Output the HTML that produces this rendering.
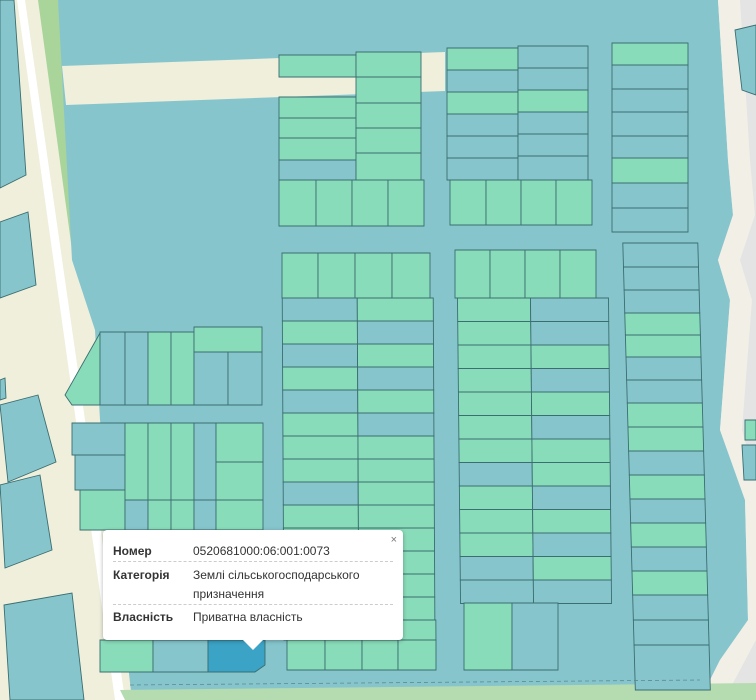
<!DOCTYPE html>
<html><head><meta charset="utf-8">
<style>
html,body{margin:0;padding:0;width:756px;height:700px;overflow:hidden;background:#efefdc;}
svg{position:absolute;left:0;top:0;}
.pop{position:absolute;left:103px;top:530px;width:300px;height:110px;background:#fff;border-radius:4px;box-shadow:0 1px 4px rgba(0,0,0,.3);font-family:"Liberation Sans",sans-serif;font-size:12px;color:#333;}
.pop .r{position:absolute;left:10px;right:10px;}
.pop .l{position:absolute;left:0;font-weight:bold;color:#333;}
.pop .v{position:absolute;left:80px;color:#333;}
.pop .sep{position:absolute;left:10px;right:10px;border-top:1px dashed #ccc;}
.tip{position:absolute;left:243px;top:640px;width:0;height:0;border-left:10px solid transparent;border-right:10px solid transparent;border-top:10px solid #fff;}
.x{position:absolute;right:6px;top:4px;font-size:11px;color:#777;}
</style></head><body>
<svg id="m" width="756" height="700" viewBox="0 0 756 700"></svg>
<div class="pop">
<div class="x">×</div>
<div class="r" style="top:14px"><span class="l">Номер</span><span class="v">0520681000:06:001:0073</span></div>
<div class="sep" style="top:31px"></div>
<div class="r" style="top:38px"><span class="l">Категорія</span><span class="v">Землі сільськогосподарського</span></div>
<div class="r" style="top:57px"><span class="l"></span><span class="v">призначення</span></div>
<div class="sep" style="top:74px"></div>
<div class="r" style="top:80px"><span class="l">Власність</span><span class="v">Приватна власність</span></div>
</div>
<div class="tip"></div>
<script>
var B='#87c5cd',G='#89dcb9',S='#3a6e70';
var o='';
function poly(p,f,st){o+='<polygon points="'+p+'" fill="'+f+'"'+(st?' stroke="'+S+'" stroke-width="0.9"':'')+'/>';}
function R(x0,x1,y0,y1,c,k){k=k||0;var a=x0+k*(y0-250),b=x1+k*(y0-250),cc=x0+k*(y1-250),d=x1+k*(y1-250);poly(a+','+y0+' '+b+','+y0+' '+d+','+y1+' '+cc+','+y1,c,1);}
// right gray area
poly('730,0 756,0 756,700 700,700','#e4e4e4');
// road white
poly('17,0 25,0 125,700 115,700','#ffffff');
// green strip
poly('38,0 58,0 88,250 72,250','#a9d49a');
// left parcels
poly('0,0 14,0 26,175 0,188',B,1);
poly('0,222 28,212 36,285 0,298',B,1);
poly('0,405 38,395 56,462 8,482',B,1);
poly('0,485 40,475 52,550 5,568',B,1);
poly('4,605 72,593 84,700 10,700',B,1);
poly('0,380 5,378 6,398 0,400',B,1);
// main blue
poly('58,0 718,0 728,160 733,215 718,260 730,300 720,430 745,500 748,620 720,660 700,700 132,700 100,420 95,330 72,260',B);
// right cream strip
poly('718,0 740,0 750,160 755,215 740,260 752,300 742,430 756,480 756,640 740,670 724,700 700,700 720,660 748,620 745,500 720,430 730,300 718,260 733,215 728,160','#f1efe6');
poly('735,30 756,25 756,95 742,90',B,1);
poly('745,420 756,420 756,440 745,440',G,1);
poly('742,445 756,445 756,480 744,480',B,1);
// horizontal road
poly('62,66 445,52 445,91 66,105','#efefdc');
// bottom green strip
poly('120,690 756,683 756,700 125,700','#b5dcb0');
// Block A
[[55,77,G],[97,118,G],[118,138,G],[138,160,G],[160,180,B]].forEach(function(r){R(279,356,r[0],r[1],r[2]);});
[[52,77,G],[77,103,G],[103,128,G],[128,153,G],[153,180,G]].forEach(function(r){R(356,421,r[0],r[1],r[2]);});
[[279,316],[316,352],[352,388],[388,424]].forEach(function(c){R(c[0],c[1],180,226,G);});
// Block B
[[48,70,G],[70,92,B],[92,114,G],[114,136,B],[136,158,B],[158,180,B]].forEach(function(r){R(447,518,r[0],r[1],r[2]);});
[[46,68,B],[68,90,B],[90,112,G],[112,134,B],[134,156,B],[156,180,B]].forEach(function(r){R(518,588,r[0],r[1],r[2]);});
[[450,486],[486,521],[521,556],[556,592]].forEach(function(c){R(c[0],c[1],180,225,G);});
// Block C
[[43,65,G],[65,89,B],[89,112,B],[112,136,B],[136,158,B],[158,183,G],[183,208,B],[208,232,B]].forEach(function(r){R(612,688,r[0],r[1],r[2]);});
// Block D
[[282,318],[318,355],[355,392],[392,430]].forEach(function(c){R(c[0],c[1],253,298,G);});
var dL=[B,G,B,G,B,G,G,G,B,G,G,B,G,B,G],dR=[G,B,G,B,G,B,G,G,G,G,G,G,G,G,G];
for(var i=0;i<14;i++){var y0=298+i*23;R(282,357,y0,y0+23,dL[i],0.005);R(357,433,y0,y0+23,dR[i],0.005);}
R(282,357,620,640,G,0.005);R(357,434,620,640,G,0.005);
[[287,325],[325,362],[362,398],[398,436]].forEach(function(c){R(c[0],c[1],640,670,G);});
// Block E
[[455,490],[490,525],[525,560],[560,596]].forEach(function(c){R(c[0],c[1],250,298,G);});
var eL=[G,G,G,G,G,G,G,B,G,G,G,B,B],eR=[B,B,G,B,G,B,G,G,B,G,B,G,B,B];
for(var i=0;i<13;i++){var y0=298+i*23.5;R(457,530,y0,y0+23.5,eL[i],0.01);R(530,608,y0,y0+23.5,eR[i],0.01);}
R(464,512,603,670,G);R(512,558,603,670,B);
// Block F
var f=[[243,267,B],[267,290,B],[290,313,B],[313,335,G],[335,357,G],[357,380,B],[380,403,B],[403,427,G],[427,451,G],[451,475,B],[475,499,G],[499,523,B],[523,547,G],[547,571,B],[571,595,G],[595,620,B],[620,645,B],[645,690,B]];
f.forEach(function(r){R(623,698,r[0],r[1],r[2],0.028);});
// Block H
poly('100,333 65,395 72,405 100,405',G,1);
[[100,125,B],[125,148,B],[148,171,G],[171,194,G]].forEach(function(c){R(c[0],c[1],332,405,c[2]);});
R(194,262,327,352,G);R(194,228,352,405,B);R(228,262,352,405,B);
// Block G
R(72,125,423,455,B);R(75,125,455,490,B);R(80,125,490,530,G);
[[125,148,G],[148,171,G],[171,194,G],[194,216,B]].forEach(function(c){R(c[0],c[1],423,500,c[2]);});
[[125,148,B],[148,171,G],[171,194,G],[194,216,B]].forEach(function(c){R(c[0],c[1],500,530,c[2]);});
R(216,263,423,462,G);R(216,263,462,500,G);R(216,263,500,530,G);
// below popup
R(100,153,640,672,G);R(153,208,640,672,B);
poly('208,640 265,640 265,665 255,672 208,672','#3aa3c6',1);
// bottom dashed line
o+='<line x1="130" y1="685" x2="700" y2="680" stroke="#5a8a90" stroke-width="0.8" stroke-dasharray="4,3"/>';
document.getElementById('m').innerHTML=o;
</script>
</body></html>
